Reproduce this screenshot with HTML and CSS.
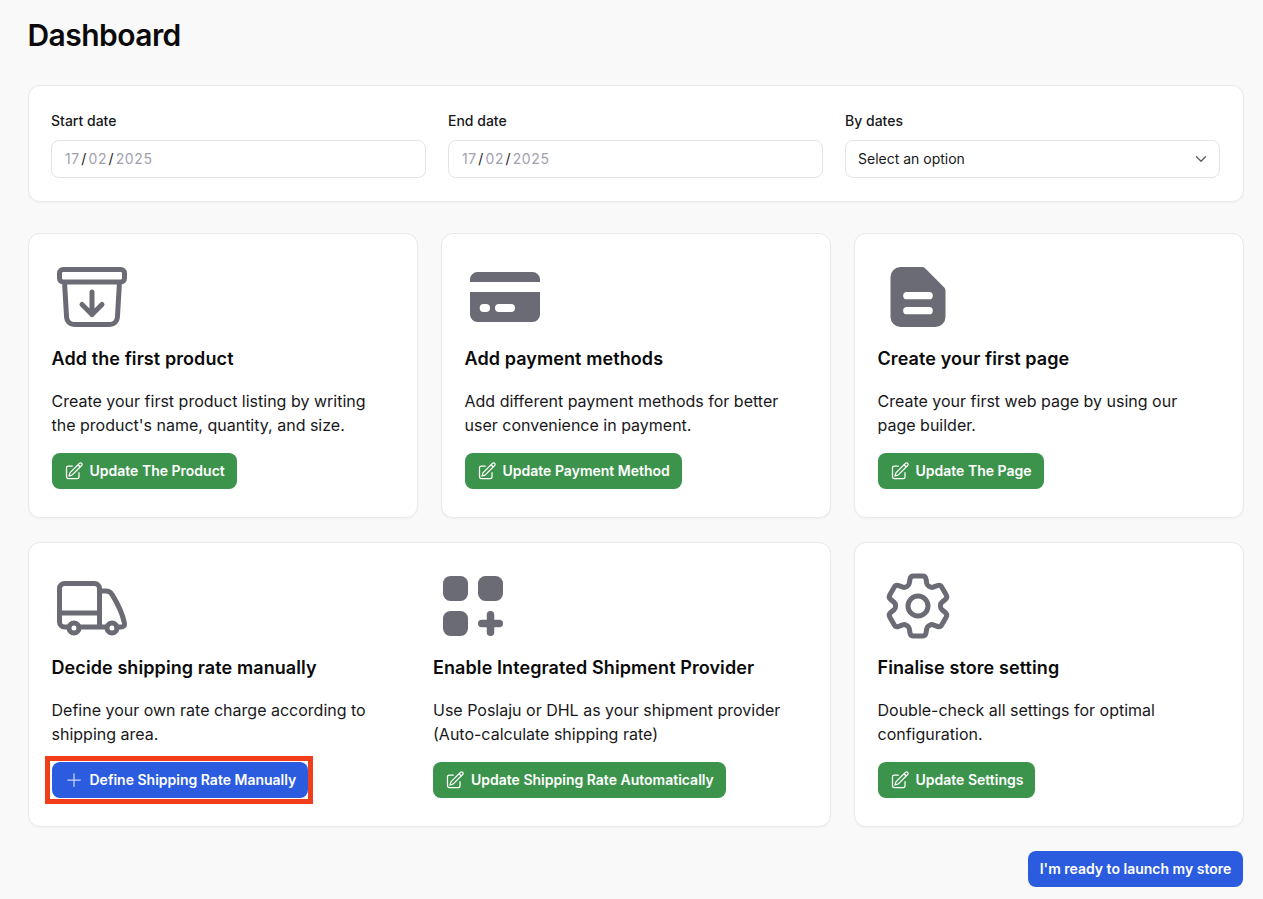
FILE: index.html
```html
<!DOCTYPE html>
<html lang="en">
<head>
<meta charset="utf-8">
<title>Dashboard</title>
<link rel="stylesheet" href="styles.css">
</head>
<body>
<main class="page">
  <h1 class="title">Dashboard</h1>

  <section class="card filters">
    <div class="field">
      <span class="label">Start date</span>
      <div class="input"><span class="muted">17</span><span class="sep">/</span><span class="muted">02</span><span class="sep">/</span><span class="muted">2025</span></div>
    </div>
    <div class="field">
      <span class="label">End date</span>
      <div class="input"><span class="muted">17</span><span class="sep">/</span><span class="muted">02</span><span class="sep">/</span><span class="muted">2025</span></div>
    </div>
    <div class="field">
      <span class="label">By dates</span>
      <div class="input select">Select an option
        <svg class="chevron" viewBox="0 0 20 20" fill="none" stroke="currentColor" stroke-width="1.5" stroke-linecap="round" stroke-linejoin="round"><path d="m5 7.5 5 5 5-5"/></svg>
      </div>
    </div>
  </section>

  <section class="grid">
    <article class="card tile">
      <div class="step">
        <svg class="icon" viewBox="0 0 24 24" fill="none" stroke="currentColor" stroke-width="1.5" stroke-linecap="round" stroke-linejoin="round"><path d="m20.25 7.5-.625 10.632a2.25 2.25 0 0 1-2.247 2.118H6.622a2.25 2.25 0 0 1-2.247-2.118L3.75 7.5m8.25 3v6.75m0 0-3-3m3 3 3-3M3.375 7.5h17.25c.621 0 1.125-.504 1.125-1.125v-1.5c0-.621-.504-1.125-1.125-1.125H3.375c-.621 0-1.125.504-1.125 1.125v1.5c0 .621.504 1.125 1.125 1.125Z"/></svg>
        <h2>Add the first product</h2>
        <p>Create your first product listing by writing the product's name, quantity, and size.</p>
        <a class="btn green"><svg class="btn-icon" viewBox="0 0 24 24" fill="none" stroke="currentColor" stroke-width="1.5" stroke-linecap="round" stroke-linejoin="round"><path d="m16.862 4.487 1.687-1.688a1.875 1.875 0 1 1 2.652 2.652L10.582 16.07a4.5 4.5 0 0 1-1.897 1.13L6 18l.8-2.685a4.5 4.5 0 0 1 1.13-1.897l8.932-8.931Zm0 0L19.5 7.125M18 14v4.75A2.25 2.25 0 0 1 15.75 21H5.25A2.25 2.25 0 0 1 3 18.75V8.25A2.25 2.25 0 0 1 5.25 6H10"/></svg>Update The Product</a>
      </div>
    </article>

    <article class="card tile">
      <div class="step">
        <svg class="icon" viewBox="0 0 24 24" fill="currentColor"><path d="M3.75 4.5h16.5a2.25 2.25 0 0 1 2.25 2.25v.75h-21v-.75A2.25 2.25 0 0 1 3.75 4.5Z"/><path fill-rule="evenodd" d="M1.5 10.5h21v6.75a2.25 2.25 0 0 1-2.25 2.25H3.75a2.25 2.25 0 0 1-2.25-2.25V10.5Zm4.1 3.6a1.2 1.2 0 0 0 0 2.4h.7a1.2 1.2 0 0 0 0-2.4h-.7Zm4.6 0a1.2 1.2 0 0 0 0 2.4h3.6a1.2 1.2 0 0 0 0-2.4h-3.6Z"/></svg>
        <h2>Add payment methods</h2>
        <p>Add different payment methods for better user convenience in payment.</p>
        <a class="btn green"><svg class="btn-icon" viewBox="0 0 24 24" fill="none" stroke="currentColor" stroke-width="1.5" stroke-linecap="round" stroke-linejoin="round"><path d="m16.862 4.487 1.687-1.688a1.875 1.875 0 1 1 2.652 2.652L10.582 16.07a4.5 4.5 0 0 1-1.897 1.13L6 18l.8-2.685a4.5 4.5 0 0 1 1.13-1.897l8.932-8.931Zm0 0L19.5 7.125M18 14v4.75A2.25 2.25 0 0 1 15.75 21H5.25A2.25 2.25 0 0 1 3 18.75V8.25A2.25 2.25 0 0 1 5.25 6H10"/></svg>Update Payment Method</a>
      </div>
    </article>

    <article class="card tile">
      <div class="step">
        <svg class="icon" viewBox="0 0 24 24" fill="currentColor"><path fill-rule="evenodd" d="M6.75 3h6.4a1.5 1.5 0 0 1 1.06.44l5.6 5.6a1.5 1.5 0 0 1 .44 1.06V18a3 3 0 0 1-3 3H6.75a3 3 0 0 1-3-3V6a3 3 0 0 1 3-3Zm1.9 7.5a1.1 1.1 0 0 0 0 2.2h6.7a1.1 1.1 0 0 0 0-2.2h-6.7Zm0 4.5a1.1 1.1 0 0 0 0 2.2h6.7a1.1 1.1 0 0 0 0-2.2h-6.7Z"/></svg>
        <h2>Create your first page</h2>
        <p>Create your first web page by using our page builder.</p>
        <a class="btn green"><svg class="btn-icon" viewBox="0 0 24 24" fill="none" stroke="currentColor" stroke-width="1.5" stroke-linecap="round" stroke-linejoin="round"><path d="m16.862 4.487 1.687-1.688a1.875 1.875 0 1 1 2.652 2.652L10.582 16.07a4.5 4.5 0 0 1-1.897 1.13L6 18l.8-2.685a4.5 4.5 0 0 1 1.13-1.897l8.932-8.931Zm0 0L19.5 7.125M18 14v4.75A2.25 2.25 0 0 1 15.75 21H5.25A2.25 2.25 0 0 1 3 18.75V8.25A2.25 2.25 0 0 1 5.25 6H10"/></svg>Update The Page</a>
      </div>
    </article>

    <article class="card tile wide">
      <div class="step">
        <svg class="icon" viewBox="0 0 24 24" fill="none" stroke="currentColor" stroke-width="1.5" stroke-linecap="round" stroke-linejoin="round"><path d="M4.8 18.3H3.75a1.5 1.5 0 0 1-1.5-1.5V6.75a1.5 1.5 0 0 1 1.5-1.5h9a1.5 1.5 0 0 1 1.5 1.5V18.3H8.1M2.25 14.1h12M14.25 7.5h1.9a2.2 2.2 0 0 1 1.9 1.1c1.9 3.1 3.1 5.8 3.7 8.6.15.7-.35 1.1-1 1.1h-1.35M16.2 18.3h-1.95"/><circle cx="6.6" cy="18.6" r="1.5"/><circle cx="18" cy="18.6" r="1.5"/></svg>
        <h2>Decide shipping rate manually</h2>
        <p>Define your own rate charge according to shipping area.</p>
        <div class="highlight-wrap">
          <a class="btn blue"><svg class="btn-icon plus" viewBox="0 0 24 24" fill="none" stroke="currentColor" stroke-width="1.5" stroke-linecap="round" stroke-linejoin="round"><path d="M12 4.5v15m7.5-7.5h-15"/></svg>Define Shipping Rate Manually</a>
          <span class="highlight"></span>
        </div>
      </div>
      <div class="step">
        <svg class="icon" viewBox="0 0 24 24" fill="currentColor"><rect x="3" y="3" width="7.5" height="7.5" rx="2.25"/><rect x="13.5" y="3" width="7.5" height="7.5" rx="2.25"/><rect x="3" y="13.5" width="7.5" height="7.5" rx="2.25"/><path d="M14.625 17.25h5.25M17.25 14.625v5.25" fill="none" stroke="currentColor" stroke-width="2.25" stroke-linecap="round"/></svg>
        <h2>Enable Integrated Shipment Provider</h2>
        <p>Use Poslaju or DHL as your shipment provider (Auto-calculate shipping rate)</p>
        <a class="btn green"><svg class="btn-icon" viewBox="0 0 24 24" fill="none" stroke="currentColor" stroke-width="1.5" stroke-linecap="round" stroke-linejoin="round"><path d="m16.862 4.487 1.687-1.688a1.875 1.875 0 1 1 2.652 2.652L10.582 16.07a4.5 4.5 0 0 1-1.897 1.13L6 18l.8-2.685a4.5 4.5 0 0 1 1.13-1.897l8.932-8.931Zm0 0L19.5 7.125M18 14v4.75A2.25 2.25 0 0 1 15.75 21H5.25A2.25 2.25 0 0 1 3 18.75V8.25A2.25 2.25 0 0 1 5.25 6H10"/></svg>Update Shipping Rate Automatically</a>
      </div>
    </article>

    <article class="card tile">
      <div class="step">
        <svg class="icon" viewBox="0 0 24 24" fill="none" stroke="currentColor" stroke-width="1.5" stroke-linecap="round" stroke-linejoin="round"><path d="M9.594 3.94c.09-.542.56-.94 1.11-.94h2.593c.55 0 1.02.398 1.11.94l.213 1.281c.063.374.313.686.645.87.074.04.147.083.22.127.325.196.72.257 1.075.124l1.217-.456a1.125 1.125 0 0 1 1.37.49l1.296 2.247a1.125 1.125 0 0 1-.26 1.431l-1.003.827c-.293.241-.438.613-.43.992a7.723 7.723 0 0 1 0 .255c-.008.378.137.75.43.991l1.004.827c.424.35.534.955.26 1.43l-1.298 2.247a1.125 1.125 0 0 1-1.369.491l-1.217-.456c-.355-.133-.75-.072-1.076.124a6.47 6.47 0 0 1-.22.128c-.331.183-.581.495-.644.869l-.213 1.281c-.09.543-.56.94-1.11.94h-2.594c-.55 0-1.019-.398-1.11-.94l-.213-1.281c-.062-.374-.312-.686-.644-.87a6.52 6.52 0 0 1-.22-.127c-.325-.196-.72-.257-1.076-.124l-1.217.456a1.125 1.125 0 0 1-1.369-.49l-1.297-2.247a1.125 1.125 0 0 1 .26-1.431l1.004-.827c.292-.24.437-.613.43-.991a6.932 6.932 0 0 1 0-.255c.007-.38-.138-.751-.43-.992l-1.004-.827a1.125 1.125 0 0 1-.26-1.43l1.297-2.247a1.125 1.125 0 0 1 1.37-.491l1.216.456c.356.133.751.072 1.076-.124.072-.044.146-.086.22-.128.332-.183.582-.495.644-.869l.214-1.28Z"/><path d="M15 12a3 3 0 1 1-6 0 3 3 0 0 1 6 0Z"/></svg>
        <h2>Finalise store setting</h2>
        <p>Double-check all settings for optimal configuration.</p>
        <a class="btn green"><svg class="btn-icon" viewBox="0 0 24 24" fill="none" stroke="currentColor" stroke-width="1.5" stroke-linecap="round" stroke-linejoin="round"><path d="m16.862 4.487 1.687-1.688a1.875 1.875 0 1 1 2.652 2.652L10.582 16.07a4.5 4.5 0 0 1-1.897 1.13L6 18l.8-2.685a4.5 4.5 0 0 1 1.13-1.897l8.932-8.931Zm0 0L19.5 7.125M18 14v4.75A2.25 2.25 0 0 1 15.75 21H5.25A2.25 2.25 0 0 1 3 18.75V8.25A2.25 2.25 0 0 1 5.25 6H10"/></svg>Update Settings</a>
      </div>
    </article>
  </section>

  <footer class="actions">
    <a class="btn blue launch">I'm ready to launch my store</a>
  </footer>
</main>
</body>
</html>
```
FILE: styles.css
```css
* { box-sizing: border-box; }

html, body { margin: 0; }

body {
  background: #f9f9f9;
  color: #0a0a0a;
  font-family: Inter, "Liberation Sans", sans-serif;
  font-size: 16px;
  line-height: 24px;
}

.page {
  padding: 17px 19.5px 12px 27.5px;
}

.title {
  margin: 0 0 32px;
  font-size: 30px;
  line-height: 36px;
  font-weight: 600;
  letter-spacing: -0.55px;
}

.card {
  background: #fff;
  border: 1px solid #e9e9ea;
  border-radius: 12px;
  box-shadow: 0 1px 2px rgba(0, 0, 0, 0.04);
}

.filters {
  display: grid;
  grid-template-columns: repeat(3, 1fr);
  gap: 22px;
  padding: 25px 22.5px 23px;
  margin-bottom: 31px;
}

.field {
  display: flex;
  flex-direction: column;
  gap: 9px;
}

.label {
  font-size: 14px;
  line-height: 20px;
  font-weight: 500;
  color: #18181b;
}

.input {
  display: flex;
  align-items: center;
  height: 38px;
  padding: 0 13px;
  background: #fff;
  border: 1px solid #e4e4e7;
  border-radius: 8px;
  font-size: 14px;
  line-height: 20px;
  letter-spacing: 0.6px;
  color: #18181b;
}

.muted { color: #a1a1b0; }

.sep {
  color: #18181b;
  margin: 0 1.5px;
}

.select {
  justify-content: space-between;
  letter-spacing: 0;
  padding: 0 9px 0 12px;
}

.chevron {
  width: 18px;
  height: 18px;
  color: #5f5f6e;
}

.grid {
  display: grid;
  grid-template-columns: repeat(3, 1fr);
  gap: 24px 23px;
}

.tile {
  padding: 23px 23px 28px;
}

.wide {
  grid-column: span 2;
  display: grid;
  grid-template-columns: repeat(2, 1fr);
  column-gap: 8px;
}

.step {
  display: flex;
  flex-direction: column;
  align-items: flex-start;
}

.icon {
  display: block;
  width: 80px;
  height: 80px;
  color: #6b6b75;
  margin-bottom: 8px;
}

.step h2 {
  margin: 0 0 16px;
  font-size: 18px;
  line-height: 28px;
  font-weight: 600;
  letter-spacing: 0.09px;
}

.step p {
  margin: 0 0 16px;
  min-height: 48px;
  color: #18181b;
}

.btn {
  display: inline-flex;
  align-items: center;
  gap: 6px;
  height: 36px;
  padding: 0 12px;
  border-radius: 8px;
  color: #fff;
  font-size: 14px;
  line-height: 20px;
  font-weight: 600;
  text-decoration: none;
  white-space: nowrap;
}

.green { background: #3c944c; }

.blue { background: #2b5ce0; }

.btn-icon {
  width: 20px;
  height: 20px;
  flex: none;
}

.plus { opacity: 0.75; }

.highlight-wrap {
  position: relative;
  display: inline-flex;
}

.highlight {
  position: absolute;
  inset: -6px -5px -6px -6.5px;
  border: 5px solid #f03e1a;
  pointer-events: none;
}

.actions {
  display: flex;
  justify-content: flex-end;
  margin-top: 24px;
  padding-right: 0.25px;
}
```
